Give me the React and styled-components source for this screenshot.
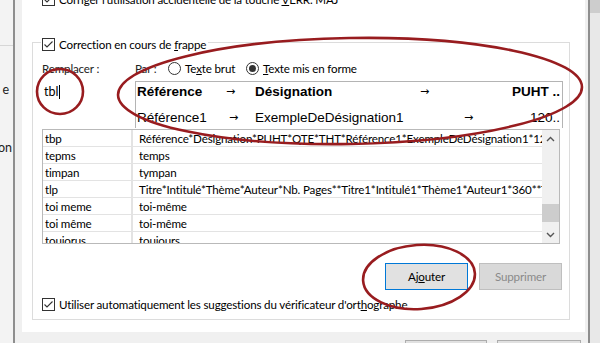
import React from 'react';
import styled, { createGlobalStyle } from 'styled-components';

const Global = createGlobalStyle`
  html, body { margin: 0; padding: 0; }
  body {
    width: 600px; height: 343px; overflow: hidden;
    background: #f0f0f0;
    font-family: Lato, "Noto Sans", sans-serif;
    font-size: 11.6px; letter-spacing: -0.16px; color: #000;
  }
`;

const Screen = styled.div`
  position: relative;
  display: flex;
  width: 600px;
  height: 343px;
  overflow: hidden;
`;

const BehindStrip = styled.div`
  width: 13px;
  flex: none;
  background: #f3f3f3;
  border-right: 2px solid #8e8e8e;
  display: flex;
  flex-direction: column;
  align-items: flex-end;
  overflow: hidden;
  font-size: 12.5px;
  letter-spacing: 0;
`;

const StripLine = styled.div`
  align-self: stretch;
  height: 1px;
  background: #d6d6d6;
  margin-top: ${p => p.$top}px;
`;

const StripText = styled.div`
  margin-top: ${p => p.$top}px;
  margin-right: ${p => p.$right || 0}px;
  line-height: 16px;
  white-space: nowrap;
  color: #222;
`;

const Dialog = styled.div`
  width: 573px;
  flex: none;
  display: flex;
  flex-direction: column;
  background: #f0f0f0;
`;

const Page = styled.div`
  margin-top: -20px;
  margin-left: 7px;
  width: 563px;
  height: 352px;
  flex: none;
  background: #fff;
  box-sizing: border-box;
  display: flex;
  flex-direction: column;
`;

const TopRow = styled.div`
  height: 38px;
  padding-left: 20px;
  display: flex;
  align-items: center;
  gap: 4px;
  white-space: nowrap;
`;

const GroupBox = styled.div`
  position: relative;
  margin: 24px 15px 0 10px;
  height: 278px;
  border: 1px solid #dcdcdc;
  box-sizing: border-box;
  display: flex;
  flex-direction: column;
  padding: 0 6px 0 9px;
`;

const Caption = styled.div`
  position: absolute;
  top: -5px;
  left: 8px;
  background: #fff;
  padding-right: 2px;
  padding-left: 1px;
  display: flex;
  align-items: center;
  gap: 4px;
  height: 13px;
  white-space: nowrap;
`;

const LabelsRow = styled.div`
  margin-top: 17px;
  height: 16px;
  display: flex;
  align-items: center;
  white-space: nowrap;
`;

const Label = styled.span`
  width: ${p => p.$w}px;
  flex: none;
  color: #222;
`;

const RadioItem = styled.label`
  display: flex;
  align-items: center;
  gap: 4px;
  width: ${p => p.$w}px;
  flex: none;
`;

const RadioCircle = styled.span`
  width: 13px;
  height: 13px;
  flex: none;
  box-sizing: border-box;
  border: 1px solid #333;
  border-radius: 50%;
  background: #fff;
  display: flex;
  align-items: center;
  justify-content: center;
  &::after {
    content: "";
    display: ${p => (p.$on ? 'block' : 'none')};
    width: 7px;
    height: 7px;
    border-radius: 50%;
    background: #333;
  }
`;

const EditRow = styled.div`
  margin-top: 5px;
  height: 47px;
  display: flex;
`;

const ReplaceInput = styled.div`
  width: 93px;
  flex: none;
  box-sizing: border-box;
  padding: 3px 0 0 2px;
  line-height: 16px;
  font-size: 12.5px;
  letter-spacing: 0;
`;

const Caret = styled.span`
  display: inline-block;
  width: 1px;
  height: 14px;
  background: #000;
  vertical-align: -3px;
  margin-left: 1px;
`;

const Preview = styled.div`
  width: 428px;
  flex: none;
  box-sizing: border-box;
  border: 1px solid #b4b4b4;
  border-bottom: none;
  overflow: hidden;
  padding-left: 1px;
  padding-right: 2px;
  font-family: "Liberation Sans", Arial, sans-serif;
  font-size: 13.5px;
  letter-spacing: 0;
`;

const PreviewLine = styled.div`
  display: flex;
  height: 20px;
  line-height: 20px;
  margin-top: ${p => p.$mt || 0}px;
  font-weight: ${p => (p.$bold ? 700 : 400)};
  white-space: nowrap;
`;

const Cell = styled.span`
  width: ${p => p.$w}px;
  flex: none;
  overflow: hidden;
`;

const Arrow = styled(Cell)`
  font-weight: 400;
  font-family: "DejaVu Sans", sans-serif;
  font-size: 11px;
`;

const LastCell = styled.span`
  flex: 1;
  text-align: right;
`;

const List = styled.div`
  margin-top: 1px;
  width: 518px;
  height: 115px;
  box-sizing: border-box;
  border: 1px solid #b9b9b9;
  display: flex;
  overflow: hidden;
`;

const Rows = styled.div`
  flex: 1;
  display: flex;
  flex-direction: column;
  overflow: hidden;
`;

const Row = styled.div`
  height: 16px;
  flex: none;
  display: grid;
  grid-template-columns: 90px 1fr;
  border-bottom: 1px solid #e3e3e3;
  line-height: 17px;
  white-space: nowrap;
`;

const KeyCell = styled.div`
  padding-left: 2px;
  border-right: 2px solid #e3e3e3;
  overflow: hidden;
`;

const ValueCell = styled.div`
  padding-left: 6px;
  overflow: hidden;
`;

const ScrollBar = styled.div`
  width: 17px;
  flex: none;
  background: #f0f0f0;
  display: flex;
  flex-direction: column;
  align-items: stretch;
`;

const ScrollBtn = styled.div`
  height: 17px;
  display: flex;
  align-items: center;
  justify-content: center;
`;

const ScrollTrack = styled.div`
  flex: 1;
  display: flex;
  flex-direction: column;
  padding-top: 57px;
`;

const Thumb = styled.div`
  height: 18px;
  background: #cdcdcd;
`;

const ButtonsRow = styled.div`
  margin-top: 19px;
  display: flex;
  justify-content: flex-end;
  gap: 11px;
  padding-right: 1px;
`;

const Button = styled.div`
  width: 83px;
  height: 27px;
  box-sizing: border-box;
  border: 1px solid ${p => (p.$disabled ? '#bfbfbf' : '#0078d7')};
  background: ${p => (p.$disabled ? '#d9d9d9' : '#e1e1e1')};
  color: ${p => (p.$disabled ? '#8a8a8a' : '#000')};
  display: flex;
  align-items: center;
  justify-content: center;
`;

const BottomRow = styled.div`
  margin-top: 8px;
  height: 13px;
  display: flex;
  align-items: center;
  gap: 4px;
  white-space: nowrap;
`;

const Footer = styled.div`
  flex: none;
  display: flex;
  gap: 10px;
  padding: 8px 0 0 390px;
`;

const FooterButton = styled.div`
  width: ${p => p.$w}px;
  height: 24px;
  box-sizing: border-box;
  border: 1px solid #adadad;
  background: #e1e1e1;
`;

const RightEdge = styled.div`
  flex: 1;
  display: flex;
`;

const RightLine = styled.div`
  width: 2px;
  background: #8e8e8e;
`;

const RightPane = styled.div`
  flex: 1;
  background: #e8e8e8;
  display: flex;
  flex-direction: column;
`;

const RightThumb = styled.div`
  height: 13px;
  background: #cdcdcd;
`;

const U = styled.span`
  text-decoration: underline;
  text-underline-offset: 1px;
`;

const Box = styled.span`
  width: 13px;
  height: 13px;
  flex: none;
  box-sizing: border-box;
  border: 1px solid #333;
  background: #fff;
  display: flex;
`;

const Overlay = styled.svg`
  position: absolute;
  left: 0;
  top: 0;
  pointer-events: none;
`;

const CheckBox = () => (
  <Box>
    <svg width="11" height="11" viewBox="0 0 11 11">
      <polyline points="1.5,5.5 4,8 9.5,2.5" fill="none" stroke="#333" strokeWidth="1.1" />
    </svg>
  </Box>
);

const Chevron = ({ up }) => (
  <svg width="9" height="6" viewBox="0 0 9 6">
    <polyline
      points={up ? '1,5 4.5,1.5 8,5' : '1,1 4.5,4.5 8,1'}
      fill="none"
      stroke="#555"
      strokeWidth="1.4"
    />
  </svg>
);

const entries = [
  ['tbp', 'Référence*Désignation*PUHT*QTE*THT*Référence1*ExempleDeDésignation1*120*5*600'],
  ['tepms', 'temps'],
  ['timpan', 'tympan'],
  ['tlp', 'Titre*Intitulé*Thème*Auteur*Nb. Pages**Titre1*Intitulé1*Thème1*Auteur1*360**Titre2'],
  ['toi meme', 'toi-même'],
  ['toi même', 'toi-même'],
  ['toujorus', 'toujours'],
];

export default function App() {
  return (
    <>
      <Global />
      <Screen>
        <BehindStrip>
          <StripLine $top={45} />
          <StripText $top={36} $right={4}>e</StripText>
          <StripText $top={42} $right={1}>on</StripText>
        </BehindStrip>
        <Dialog>
          <Page>
            <TopRow>
              <CheckBox />
              <span>Corriger l'utilisation accidentelle de la touche <U>V</U>ERR. MAJ</span>
            </TopRow>
            <GroupBox>
              <Caption>
                <CheckBox />
                <span>Correction en cours de <U>f</U>rappe</span>
              </Caption>
              <LabelsRow>
                <Label $w={93}>Remplacer :</Label>
                <Label $w={33}>Par :</Label>
                <RadioItem $w={78}>
                  <RadioCircle />
                  <span>Te<U>x</U>te brut</span>
                </RadioItem>
                <RadioItem>
                  <RadioCircle $on />
                  <span><U>T</U>exte mis en forme</span>
                </RadioItem>
              </LabelsRow>
              <EditRow>
                <ReplaceInput>
                  tbl<Caret />
                </ReplaceInput>
                <Preview>
                  <PreviewLine $bold>
                    <Cell $w={89}>Référence</Cell>
                    <Arrow $w={29}>→</Arrow>
                    <Cell $w={165}>Désignation</Cell>
                    <Arrow $w={29}>→</Arrow>
                    <LastCell>PUHT ..</LastCell>
                  </PreviewLine>
                  <PreviewLine $mt={6}>
                    <Cell $w={92}>Référence1</Cell>
                    <Arrow $w={26}>→</Arrow>
                    <Cell $w={209}>ExempleDeDésignation1</Cell>
                    <Arrow $w={29}>→</Arrow>
                    <LastCell>120..</LastCell>
                  </PreviewLine>
                </Preview>
              </EditRow>
              <List>
                <Rows>
                  {entries.map(([k, v]) => (
                    <Row key={k}>
                      <KeyCell>{k}</KeyCell>
                      <ValueCell>{v}</ValueCell>
                    </Row>
                  ))}
                </Rows>
                <ScrollBar>
                  <ScrollBtn><Chevron up /></ScrollBtn>
                  <ScrollTrack><Thumb /></ScrollTrack>
                  <ScrollBtn><Chevron /></ScrollBtn>
                </ScrollBar>
              </List>
              <ButtonsRow>
                <Button>Aj<U>o</U>uter</Button>
                <Button $disabled>Supprimer</Button>
              </ButtonsRow>
              <BottomRow>
                <CheckBox />
                <span>Utiliser automatiquement les suggestions du vérificateur d'ort<U>h</U>ographe</span>
              </BottomRow>
            </GroupBox>
          </Page>
          <Footer>
            <FooterButton $w={82} />
            <FooterButton $w={84} />
          </Footer>
        </Dialog>
        <RightEdge>
          <RightLine />
          <RightPane>
            <RightThumb />
          </RightPane>
        </RightEdge>
        <Overlay width="600" height="343" viewBox="0 0 600 343">
          <g fill="none" stroke="#981c1f" strokeWidth="2.6">
            <ellipse cx="60" cy="91.5" rx="23" ry="22.5" />
            <ellipse cx="350" cy="91" rx="232" ry="53" transform="rotate(-1 350 91)" />
            <ellipse cx="419" cy="277" rx="56" ry="32" transform="rotate(-4 419 277)" />
          </g>
        </Overlay>
      </Screen>
    </>
  );
}
